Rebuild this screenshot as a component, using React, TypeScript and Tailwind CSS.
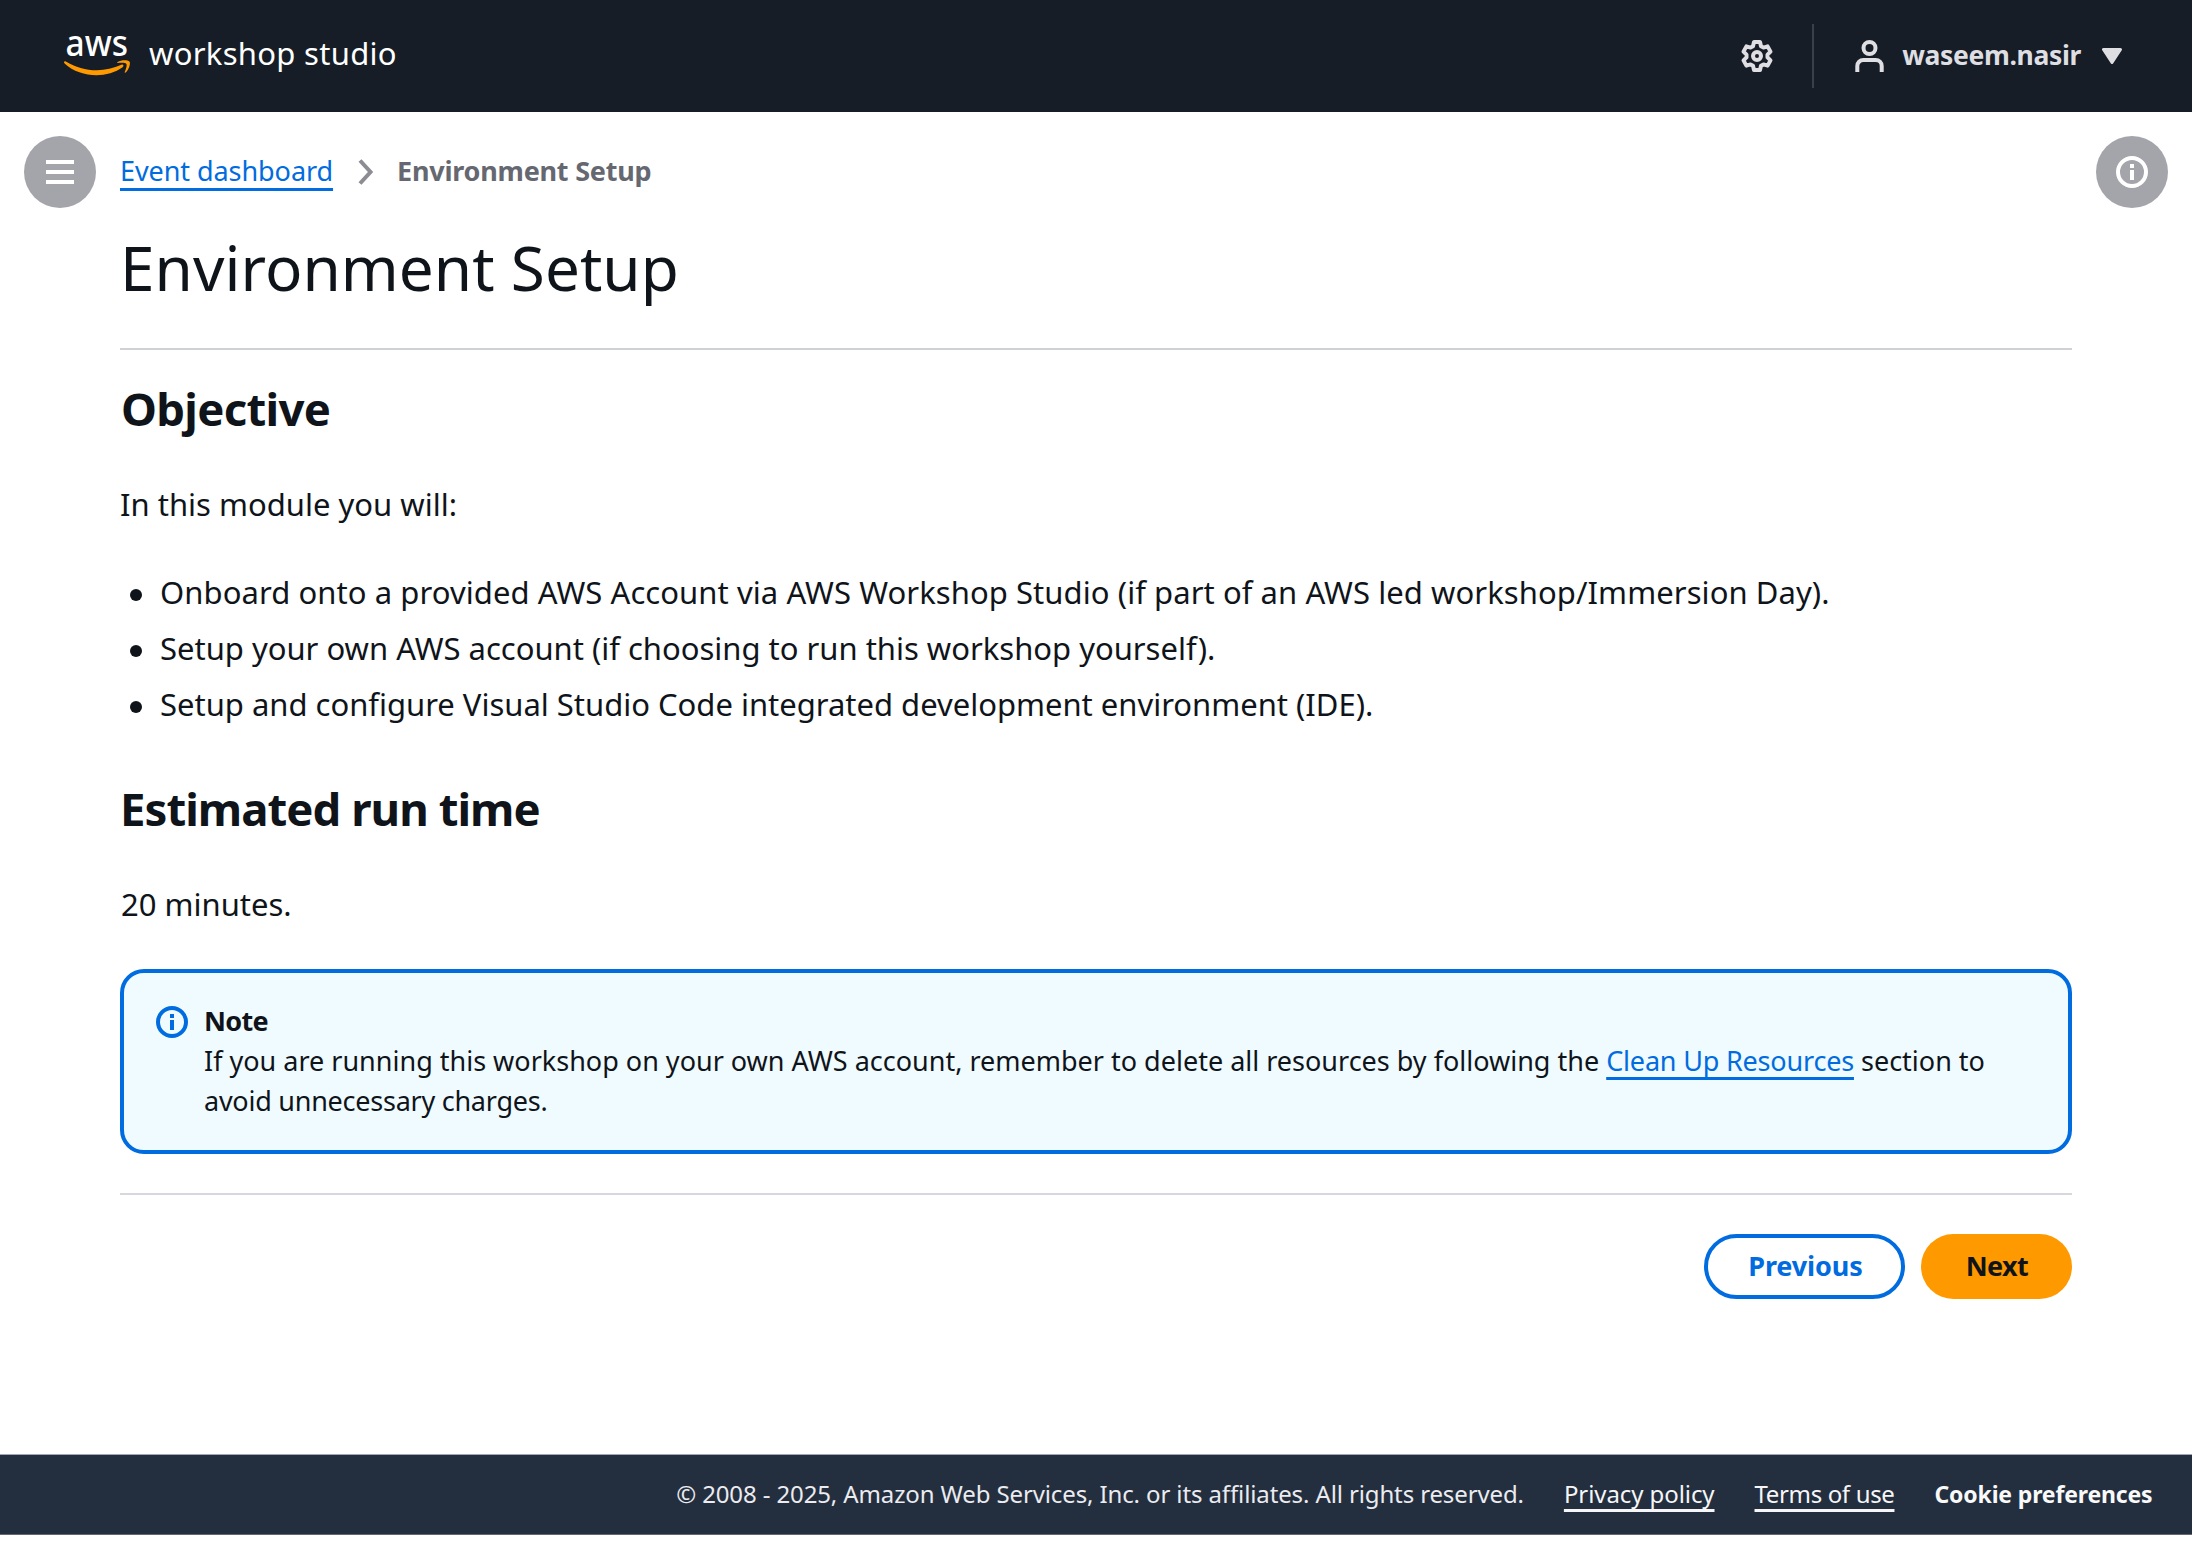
import type { ReactNode } from "react";

function AwsLogo() {
  return (
    <svg width="68" height="56" viewBox="0 -12 68 56" className="-mt-3 shrink-0 overflow-visible">
      <text
        x="1.500"
        y="24"
        textLength="62.500"
        lengthAdjust="spacingAndGlyphs"
        fill="#ffffff"
        className="font-['Noto_Sans',sans-serif] text-[36.500px] font-medium"
      >
        aws
      </text>
      <path
        d="M0.400 29.600 C-0.300 30.100 0 30.800 0.600 31.400 C9 39.200 21 43.200 32.500 43.200 C41.500 43.200 51.500 40.400 58.600 35.200 C60.400 33.900 59.200 32 57.400 32.800 C49.600 36.400 41 38.200 33 38.200 C21.500 38.200 11.500 35 1.800 29.400 C1.300 29.100 0.800 29.200 0.400 29.600 Z"
        fill="#ff9900"
      />
      <path
        d="M53.800 31 C53.100 31 53 30.400 53.600 30 C57 27.800 63.400 27.700 65.400 29.400 C67 31 64.800 37.800 61.600 40.600 C61 41.100 60.400 40.800 60.700 40.100 C61.700 37.500 63.300 33.500 62.400 31.900 C61.400 30.400 56.800 30.800 53.800 31 Z"
        fill="#ff9900"
      />
    </svg>
  );
}

function GearIcon() {
  return (
    <svg width="32" height="32" viewBox="-16 -16 32 32" fill="none" stroke="#dedee3" strokeWidth="4" strokeLinejoin="round">
      <path d="M-3 -14 L3 -14 L4 -9.800 L6.500 -8.400 L10.600 -9.600 L13.500 -4.400 L10.500 -1.400 L10.500 1.400 L13.500 4.400 L10.600 9.600 L6.500 8.400 L4 9.800 L3 14 L-3 14 L-4 9.800 L-6.500 8.400 L-10.600 9.600 L-13.500 4.400 L-10.500 1.400 L-10.500 -1.400 L-13.500 -4.400 L-10.600 -9.600 L-6.500 -8.400 L-4 -9.800 Z" />
      <circle r="4" />
    </svg>
  );
}

function UserIcon() {
  return (
    <svg width="30" height="32" viewBox="0 0 30 32" fill="none" stroke="#dedee3" strokeWidth="4">
      <circle cx="14.500" cy="8" r="6" />
      <path d="M2.300 32 V26 A6 6 0 0 1 8.300 20 H20.700 A6 6 0 0 1 26.700 26 V32" />
    </svg>
  );
}

function InfoIcon({ color }: { color: string }) {
  return (
    <svg width="32" height="32" viewBox="0 0 32 32" fill="none" className="shrink-0">
      <circle cx="16" cy="16" r="14" stroke={color} strokeWidth="4" />
      <path d="M14 8 H18 V12 H14 Z M14 14 H18 V24 H14 Z" fill={color} />
    </svg>
  );
}

function RoundButton({ label, children }: { label: string; children: ReactNode }) {
  return (
    <button aria-label={label} className="flex size-[72px] shrink-0 items-center justify-center rounded-full bg-[#a4a4ab]">
      {children}
    </button>
  );
}

function Header() {
  return (
    <header className="flex h-[112px] items-center justify-between bg-[#161d26] pr-[70px] pl-16">
      <div className="flex items-center pb-1">
        <AwsLogo />
        <span className="ml-[17px] pb-0.5 text-[31px] leading-[44px] tracking-[0.300px] text-white">workshop studio</span>
      </div>
      <div className="flex items-center">
        <GearIcon />
        <div className="ml-[39px] h-16 w-[2px] bg-[#3a404a]" />
        <div className="ml-[41px] flex items-center">
          <UserIcon />
          <span className="ml-[17px] pb-[3px] text-[26.500px] leading-10 font-bold tracking-[-0.350px] text-[#dedee3]">
            waseem.nasir
          </span>
          <svg width="20" height="16" viewBox="0 0 20 16" className="ml-[21px]">
            <path d="M1.500 1.500 H18.500 L10 14.500 Z" fill="#dedee3" stroke="#dedee3" strokeWidth="3" strokeLinejoin="round" />
          </svg>
        </div>
      </div>
    </header>
  );
}

function Item({ children }: { children: ReactNode }) {
  return (
    <li className="flex items-center">
      <span className="mt-[5px] mr-[18px] ml-[10px] size-3 shrink-0 rounded-full bg-[#0f141a]" />
      <span className="whitespace-nowrap">{children}</span>
    </li>
  );
}

const link = "underline decoration-[2.5px] [text-decoration-skip-ink:none]";

export default function App() {
  return (
    <div className="flex min-h-[1546px] w-[2192px] flex-col bg-white font-['Noto_Sans',sans-serif] text-[#0f141a]">
      <Header />
      <div className="flex h-[1342px] items-start gap-6 px-6 pt-6">
        <RoundButton label="Open navigation">
          <svg width="28" height="24" viewBox="0 0 28 24" fill="#ffffff">
            <path d="M0 0 H28 V4 H0 Z M0 10 H28 V14 H0 Z M0 20 H28 V24 H0 Z" />
          </svg>
        </RoundButton>

        <main className="flex flex-1 flex-col">
          <nav className="flex h-[72px] items-center text-[27px] leading-10">
            <a className={`${link} pb-[3px] tracking-[-0.070px] text-[#006ce0] underline-offset-[7px]`}>Event dashboard</a>
            <svg width="16" height="26" viewBox="0 0 16 26" fill="none" className="ml-[25px]">
              <path d="M2 1.500 L12.500 13 L2 24.500" stroke="#8c8c94" strokeWidth="4" />
            </svg>
            <span className="ml-[23px] pb-[3px] font-bold tracking-[-0.230px] text-[#656871]">Environment Setup</span>
          </nav>
          <h1 className="mt-[23px] text-[62px] leading-[72px] tracking-[0.050px]">Environment Setup</h1>
          <div className="mt-[45px] h-0.5 bg-[#d0d0d7]" />

          <h2 className="mt-[30px] ml-px text-[45.500px] leading-[56px] font-bold tracking-[-0.700px]">Objective</h2>
          <p className="mt-[44px] text-[31px] leading-[48px]">In this module you will:</p>
          <ul className="mt-9 text-[31px] leading-[56px]">
            <Item>
              <span className="tracking-[0.070px]">
                Onboard onto a provided AWS Account via AWS Workshop Studio (if part of an AWS led workshop/Immersion Day).
              </span>
            </Item>
            <Item>
              <span className="tracking-[-0.010px]">
                Setup your own AWS account (if choosing to run this workshop yourself).
              </span>
            </Item>
            <Item>
              <span className="tracking-[-0.010px]">
                Setup and configure Visual Studio Code integrated development environment (IDE).
              </span>
            </Item>
          </ul>

          <h2 className="mt-12 text-[45.500px] leading-[56px] font-bold tracking-[-0.960px]">Estimated run time</h2>
          <p className="mt-[44px] ml-px text-[31px] leading-[48px]">20 minutes.</p>

          <section className="mt-[41px] flex h-[185px] gap-4 rounded-[24px] border-4 border-[#006ce0] bg-[#f0fbff] px-8 py-7">
            <div className="mt-[5px]">
              <InfoIcon color="#006ce0" />
            </div>
            <div className="text-[27px] leading-10 whitespace-nowrap">
              <div className="font-bold tracking-[-0.700px]">Note</div>
              <p>
                If you are running this workshop on your own AWS account, remember to delete all resources by following the{" "}
                <a className={`${link} tracking-[-0.190px] text-[#006ce0] underline-offset-[6px]`}>Clean Up Resources</a>{" "}
                section to
              </p>
              <p className="tracking-[-0.250px]">avoid unnecessary charges.</p>
            </div>
          </section>

          <div className="mt-[39px] h-0.5 bg-[#d7d7de]" />
          <div className="mt-[39px] flex justify-end gap-4 text-[27px] leading-10 font-bold">
            <button className="flex h-[65px] w-[201px] items-center justify-center rounded-full border-4 border-[#006ce0] pb-0.5 pl-0.5 tracking-[-0.100px] text-[#006ce0]">
              Previous
            </button>
            <button className="flex h-[65px] w-[151px] items-center justify-center rounded-full bg-[#ff9900] pb-0.5 pl-px tracking-[-0.600px]">
              Next
            </button>
          </div>
        </main>

        <RoundButton label="Open help">
          <InfoIcon color="#ffffff" />
        </RoundButton>
      </div>

      <footer className="flex h-[81px] items-center justify-end gap-10 border-t border-b border-t-[#a0a7b0] border-b-[#656871] bg-[#232f3e] pr-[39.500px] pb-0.5 text-[24px] leading-10 whitespace-nowrap">
        <span className="tracking-[-0.120px] text-[#ebebf0]">
          © 2008 - 2025, Amazon Web Services, Inc. or its affiliates. All rights reserved.
        </span>
        <a className={`${link} tracking-[-0.080px] text-[#f6f6f9] underline-offset-[6px]`}>Privacy policy</a>
        <a className={`${link} tracking-[-0.350px] text-[#f6f6f9] underline-offset-[6px]`}>Terms of use</a>
        <a className="text-[23px] font-bold tracking-[-0.150px] text-[#f9f9fa]">Cookie preferences</a>
      </footer>
    </div>
  );
}
